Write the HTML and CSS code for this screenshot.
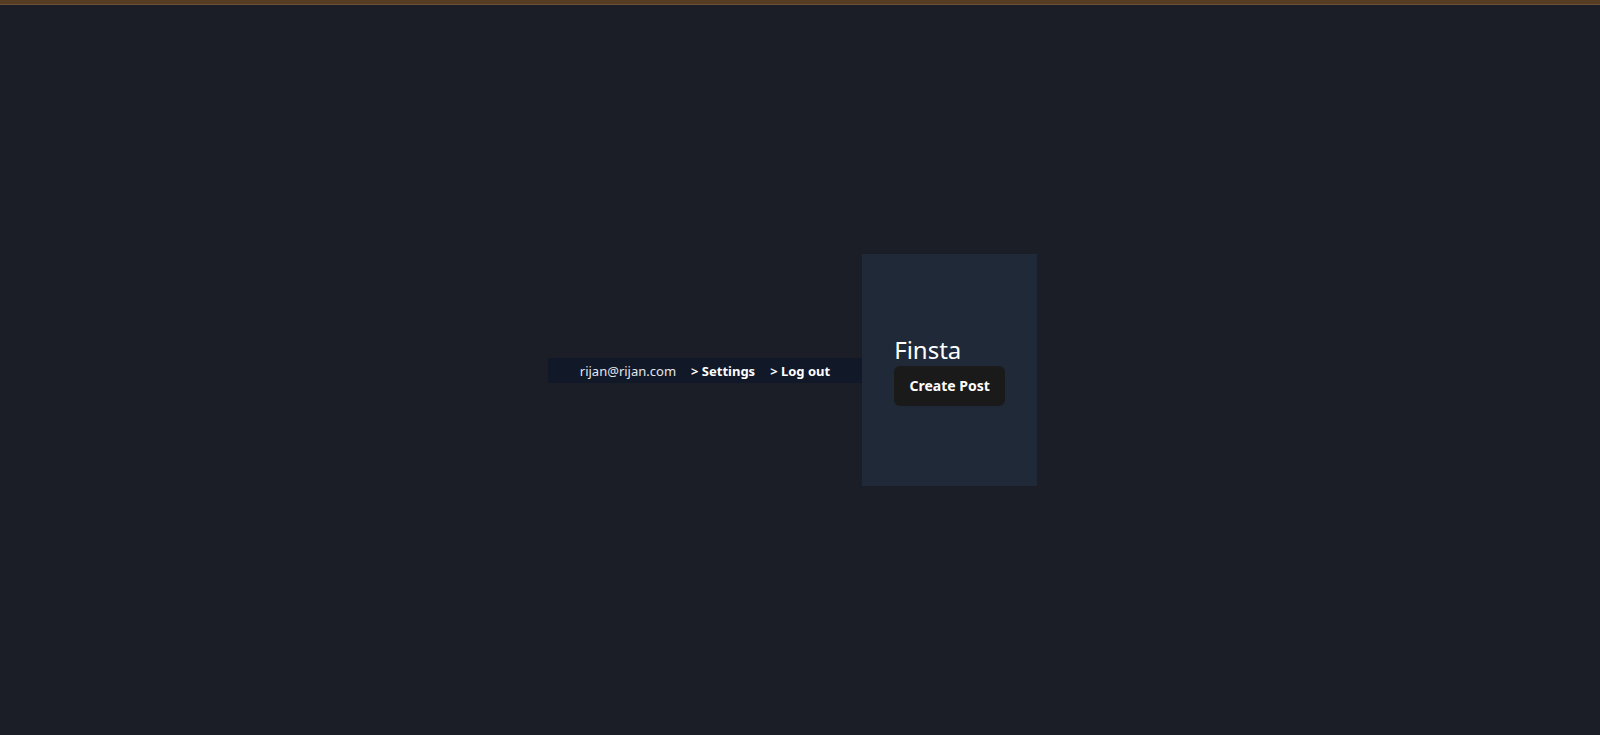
FILE: index.html
```html
<!DOCTYPE html>
<html>
<head>
<meta charset="utf-8">
<link rel="stylesheet" href="styles.css">
</head>
<body>
<div class="topline"></div>
<main class="stage">
  <nav class="nav">
    <span class="email">rijan@rijan.com</span>
    <a class="link">&gt; Settings</a>
    <a class="link">&gt; Log out</a>
  </nav>
  <section class="panel">
    <h1 class="brand">Finsta</h1>
    <button class="btn">Create Post</button>
  </section>
</main>
</body>
</html>
```

FILE: styles.css
```css
* { box-sizing: border-box; }
html, body { margin: 0; padding: 0; }
body {
  background: #1b1e26;
  font-family: "Noto Sans", sans-serif;
  color: #fff;
  min-height: 100vh;
  display: flex;
  flex-direction: column;
}
.topline {
  height: 5px;
  background: #553c22;
  border-bottom: 1px solid #6b5033;
}
.stage {
  flex: 1;
  display: flex;
  align-items: center;
  justify-content: center;
  padding-right: 15px;
}
.nav {
  display: flex;
  align-items: center;
  gap: 15px;
  background: #111827;
  padding: 1px 32px 0 32px;
  height: 25px;
  font-size: 13px;
}
.email { color: #e5e7eb; }
.link { color: #fff; font-weight: 700; }
.panel {
  background: #1f2937;
  width: 175px;
  height: 232px;
  padding: 0 32px 2px 32px;
  display: flex;
  flex-direction: column;
  justify-content: center;
  align-items: flex-start;
}
.brand {
  margin: 0;
  font-size: 24px;
  font-weight: 400;
  line-height: normal;
}
.btn {
  font-family: "Noto Sans", sans-serif;
  background: #1a1a1a;
  color: #fff;
  border: none;
  border-radius: 6px;
  height: 40px;
  width: 111px;
  font-size: 14px;
  font-weight: 700;
  padding: 0;
}
```
